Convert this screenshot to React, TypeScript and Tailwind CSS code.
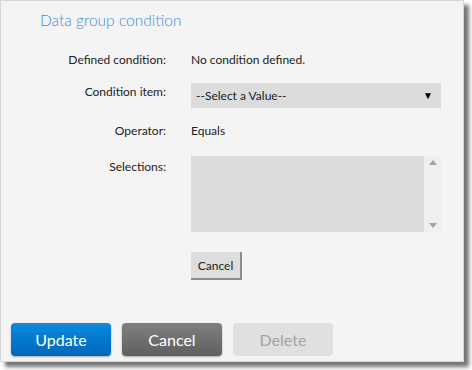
import React from 'react';

const font = { fontFamily: 'Lato, "Open Sans", sans-serif' };

export default function App() {
  return (
    <div className="w-[472px] h-[370px] bg-white" style={font}>
      <div className="w-[464px] h-[362px] bg-[#f4f4f4] border border-[#d6d6d6] shadow-[5px_5px_4px_rgba(0,0,0,0.55)] flex flex-col">
        {/* Title */}
        <h1 className="pl-[39px] pt-[9px] text-[15.5px] font-light text-[#3d8fd6] leading-[20px]">
          Data group condition
        </h1>

        {/* Form rows */}
        <div className="mt-[22px] grid grid-cols-[165px_250px] gap-x-[25px] text-[12px] text-[#222] leading-[15px]">
          <div className="text-right">Defined condition:</div>
          <div>No condition defined.</div>

          <div className="text-right mt-[16px] pt-[1px]">Condition item:</div>
          <div className="mt-[16px] h-[25px] bg-[#dcdcdc] flex items-center justify-between pl-[5px] pr-[8px]">
            <span>--Select a Value--</span>
            <span className="text-[10px] text-black">▼</span>
          </div>

          <div className="text-right mt-[15px]">Operator:</div>
          <div className="mt-[15px]">Equals</div>

          <div className="text-right mt-[18px] pt-[3px]">Selections:</div>
          <div className="mt-[18px] h-[76px] flex">
            <div className="flex-1 bg-[#dcdcdc]" />
            <div className="w-[17px] bg-[#efefef] flex flex-col items-center justify-between py-[4px]">
              <svg width="8" height="5" viewBox="0 0 8 5"><path d="M0 5 L4 0 L8 5 Z" fill="#a3a3a3" /></svg>
              <svg width="8" height="5" viewBox="0 0 8 5"><path d="M0 0 L4 5 L8 0 Z" fill="#a3a3a3" /></svg>
            </div>
          </div>

          <div />
          <div className="mt-[20px]">
            <button className="h-[28px] w-[51px] bg-[#dedede] border-r-2 border-b-2 border-[#8c8c8c] text-[12px] text-[#222] flex items-center justify-center">
              Cancel
            </button>
          </div>
        </div>

        {/* Footer buttons */}
        <div className="mt-auto mb-[5px] ml-[10px] flex gap-[11px]">
          <button className="w-[100px] h-[33px] rounded-[4px] bg-gradient-to-b from-[#0a8ae0] to-[#0068b8] text-white text-[16px] shadow-[0_1px_2px_rgba(0,0,0,0.3)]">
            Update
          </button>
          <button className="w-[100px] h-[33px] rounded-[4px] bg-gradient-to-b from-[#808080] to-[#5f5f5f] text-white text-[16px] shadow-[0_1px_2px_rgba(0,0,0,0.3)]">
            Cancel
          </button>
          <button className="w-[100px] h-[33px] rounded-[4px] bg-[#e0e0e0] text-[#a4a4a4] text-[16px]">
            Delete
          </button>
        </div>
      </div>
    </div>
  );
}
